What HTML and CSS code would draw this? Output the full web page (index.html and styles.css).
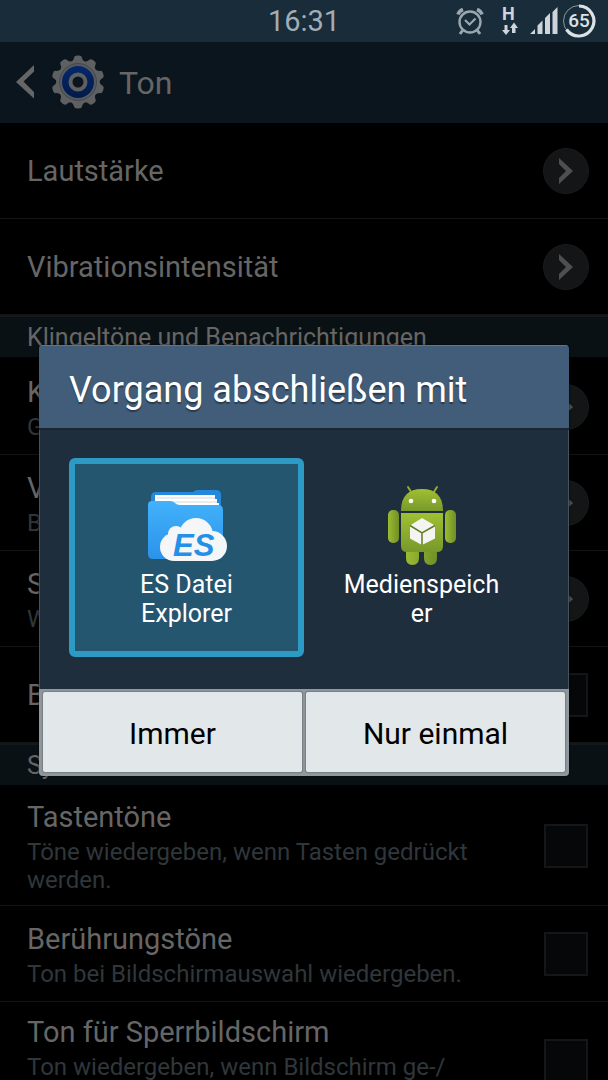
FILE: index.html
```html
<!DOCTYPE html>
<html lang="de">
<head>
    <meta charset="UTF-8">
    <meta name="viewport" content="width=device-width, initial-scale=1.0">
    <title>Ton</title>
    <link rel="stylesheet" href="styles.css">
</head>

<body>

    <div class="status-bar">
        <time class="clock">16:31</time>
        <div class="status-icons">
            <svg class="alarm" width="28" height="28" viewBox="0 0 28 28" fill="none" stroke="#9ba6ae">
                <circle cx="14" cy="15" r="10.5" stroke-width="2.4"/>
                <path d="M9 13l4.500 4.500 6-6" stroke-width="2.200"/>
                <path d="M2 7.500q1-3.500 5-5M26 7.500q-1-3.500-5-5" stroke-width="3.500"/>
                <path d="M6.500 23.500l-2.500 3.500M21.500 23.500l2.500 3.500" stroke-width="3"/>
            </svg>
            <svg class="net" width="16" height="30" viewBox="0 0 16 30" fill="#ced4d9">
                <text x="0" y="14" class="net-type">H</text>
                <path d="M2.500 19h3v5h2.500l-4 5-4-5h2.500zM10 27h3.500v-5h2.500l-4-5.500-4 5.500h2z"/>
            </svg>
            <svg width="28" height="28" viewBox="0 0 28 28" fill="#ced4d9">
                <path d="M0 27l5-5v5zM7.500 27v-8.500l5-5v13.500zM15 27v-16l5-5v21zM22.500 27v-22l5-5v27z"/>
            </svg>
            <svg width="34" height="34" viewBox="0 0 34 34">
                <circle cx="17" cy="17" r="15.500" fill="none" stroke="#8b959c" stroke-width="1"/>
                <path d="M17 2a15 15 0 1 1-12.500 23.500" fill="none" stroke="#dce1e6" stroke-width="3.200"/>
                <text x="17" y="23" text-anchor="middle" class="battery">65</text>
            </svg>
        </div>
    </div>

    <header class="title-bar">
        <a href="#" class="back" aria-label="Zurück">
            <svg width="18" height="34" viewBox="0 0 18 34"><path d="M18 0v6.500L7.500 16.500 18 27v6.500L0 17z" fill="#666"/></svg>
        </a>
        <svg class="gear" width="54" height="54" viewBox="-27 -27 54 54">
            <defs>
                <linearGradient id="ring" x1="0" y1="0" x2="0" y2="1">
                    <stop offset="0" stop-color="#04286c"/>
                    <stop offset="1" stop-color="#021a48"/>
                </linearGradient>
                <path id="tooth" d="M-7-20Q-4-22-3.500-25.500Q-3-26.500 0-26.500T3.500-25.500Q4-22 7-20z" fill="#5f6062"/>
            </defs>
            <use href="#tooth"/>
            <use href="#tooth" transform="rotate(36)"/>
            <use href="#tooth" transform="rotate(72)"/>
            <use href="#tooth" transform="rotate(108)"/>
            <use href="#tooth" transform="rotate(144)"/>
            <use href="#tooth" transform="rotate(180)"/>
            <use href="#tooth" transform="rotate(216)"/>
            <use href="#tooth" transform="rotate(252)"/>
            <use href="#tooth" transform="rotate(288)"/>
            <use href="#tooth" transform="rotate(324)"/>
            <circle r="21.500" fill="#5f6062"/>
            <circle r="18.500" fill="#565a5e" stroke="#45494d" stroke-width="1"/>
            <circle r="16" fill="url(#ring)"/>
            <circle r="7.500" fill="#0b151d" stroke="#5f6062" stroke-width="4"/>
        </svg>
        <h1>Ton</h1>
    </header>

    <main class="settings">
        <a href="#" class="row">
            <span class="text"><span class="name">Lautstärke</span></span>
            <span class="more"><svg width="14" height="26" viewBox="0 0 14 26"><path d="M0 0l14 13L0 26v-6l7-7-7-7z"/></svg></span>
        </a>
        <a href="#" class="row">
            <span class="text"><span class="name">Vibrationsintensität</span></span>
            <span class="more"><svg width="14" height="26" viewBox="0 0 14 26"><path d="M0 0l14 13L0 26v-6l7-7-7-7z"/></svg></span>
        </a>

        <h2>Klingeltöne und Benachrichtigungen</h2>
        <a href="#" class="row">
            <span class="text"><span class="name">Klingeltöne</span><span class="info">Galaxy</span></span>
            <span class="more"><svg width="14" height="26" viewBox="0 0 14 26"><path d="M0 0l14 13L0 26v-6l7-7-7-7z"/></svg></span>
        </a>
        <a href="#" class="row">
            <span class="text"><span class="name">Vibrationen</span><span class="info">Basic</span></span>
            <span class="more"><svg width="14" height="26" viewBox="0 0 14 26"><path d="M0 0l14 13L0 26v-6l7-7-7-7z"/></svg></span>
        </a>
        <a href="#" class="row">
            <span class="text"><span class="name">Standardton</span><span class="info">Whistle</span></span>
            <span class="more"><svg width="14" height="26" viewBox="0 0 14 26"><path d="M0 0l14 13L0 26v-6l7-7-7-7z"/></svg></span>
        </a>
        <label class="row">
            <span class="text"><span class="name">Beim Klingeln vibrieren</span></span>
            <input type="checkbox">
        </label>

        <h2>System</h2>
        <label class="row">
            <span class="text"><span class="name">Tastentöne</span><span class="info">Töne wiedergeben, wenn Tasten gedrückt werden.</span></span>
            <input type="checkbox">
        </label>
        <label class="row">
            <span class="text"><span class="name">Berührungstöne</span><span class="info">Ton bei Bildschirmauswahl wiedergeben.</span></span>
            <input type="checkbox">
        </label>
        <label class="row">
            <span class="text"><span class="name">Ton für Sperrbildschirm</span><span class="info">Ton wiedergeben, wenn Bildschirm ge-/<br>entsperrt wird.</span></span>
            <input type="checkbox">
        </label>
    </main>

    <div class="overlay">
        <section class="dialog" role="dialog" aria-labelledby="dialogTitle">
            <h2 id="dialogTitle" class="dialog-title">Vorgang abschließen mit</h2>
            <div class="apps">
                <button class="app selected">
                    <svg width="80" height="80" viewBox="0 0 80 80">
                        <defs>
                            <linearGradient id="folder" x1="0" y1="0" x2="0" y2="1">
                                <stop offset="0" stop-color="#43b1fb"/>
                                <stop offset="1" stop-color="#2a93ea"/>
                            </linearGradient>
                        </defs>
                        <path d="M4 12q0-5 5-5h37q2-2 5-2h18q5 0 5 5v30H4z" fill="#2489dc"/>
                        <path d="M8 10h60v4h2v4h2v6H8z" fill="#fff"/>
                        <path d="M10 13h58M10 17h60" stroke="#d0dae2" stroke-width="1"/>
                        <path d="M1 20q0-4 4-4h18q3 0 5 2t5 2h38q5 0 5 5v44q0 5-5 5H6q-5 0-5-5z" fill="url(#folder)"/>
                        <g fill="#f5f6f7">
                            <circle cx="27" cy="62" r="14"/>
                            <circle cx="29" cy="49" r="8"/>
                            <circle cx="49" cy="50" r="17"/>
                            <circle cx="65" cy="61" r="15"/>
                            <path d="M27 55h38v21H27z"/>
                        </g>
                        <text x="26" y="71" class="es">ES</text>
                    </svg>
                    <span class="app-name">ES Datei Explorer</span>
                </button>
                <button class="app">
                    <svg width="80" height="80" viewBox="0 0 80 80">
                        <defs>
                            <linearGradient id="droid" x1="0" y1="0" x2="0" y2="1">
                                <stop offset="0" stop-color="#a0c033"/>
                                <stop offset="1" stop-color="#78992a"/>
                            </linearGradient>
                            <linearGradient id="limb" x1="0" y1="0" x2="1" y2="0">
                                <stop offset="0" stop-color="#9bbb32"/>
                                <stop offset="1" stop-color="#708f27"/>
                            </linearGradient>
                        </defs>
                        <path d="M26 2l5 8M55 2l-5 8" stroke="#8dad2d" stroke-width="2" stroke-linecap="round"/>
                        <path d="M24 64h13v9q0 7-6.500 7t-6.500-7zM42 64h13v9q0 7-6.500 7t-6.500-7z" fill="url(#limb)"/>
                        <rect x="6" y="25" width="11" height="33" rx="5" fill="url(#limb)"/>
                        <rect x="63" y="25" width="11" height="33" rx="5" fill="url(#limb)"/>
                        <path d="M19 26Q19 4 40 4t21 22z" fill="url(#droid)"/>
                        <path d="M19 28h42v33q0 6-6 6H25q-6 0-6-6z" fill="url(#droid)"/>
                        <circle cx="29" cy="16" r="2.300" fill="#fff"/>
                        <circle cx="52" cy="16" r="2.300" fill="#fff"/>
                        <path d="M40 33l13 7.500v13L40 60l-12-6.500v-13z" fill="#f4f5f2"/>
                        <path d="M28 40.500l12 7.500 13-7.500M40 48v12" fill="none" stroke="#5f7b22" stroke-width="1.500"/>
                    </svg>
                    <span class="app-name">Medienspeicher</span>
                </button>
            </div>
            <div class="buttons">
                <button>Immer</button>
                <button>Nur einmal</button>
            </div>
        </section>
    </div>

</body>
</html>
```
FILE: styles.css
```css
* {
    box-sizing: border-box;
}

body {
    margin: 0;
    height: 100vh;
    overflow: hidden;
    background: #000;
    color: #666;
    font-family: Roboto, "Noto Sans", sans-serif;
}

h1, h2 {
    margin: 0;
    font-weight: 400;
}

a {
    color: inherit;
    text-decoration: none;
}

button {
    font-family: inherit;
    border: 0;
    padding: 0;
}

svg {
    display: block;
    flex-shrink: 0;
}

/* status bar */
.status-bar {
    display: grid;
    grid-template-columns: 1fr auto 1fr;
    align-items: center;
    height: 42px;
    padding: 0 12px;
    background: #182c3a;
}

.clock {
    grid-column: 2;
    font-size: 29px;
    color: #a3adb5;
}

.status-icons {
    display: flex;
    align-items: center;
    justify-content: flex-end;
    gap: 4px;
}

.alarm {
    margin-right: 14px;
}

.net {
    margin-right: 8px;
    overflow: visible;
}

.net-type {
    font-size: 18px;
    font-weight: 700;
}

.battery {
    font-size: 19px;
    font-weight: 500;
    fill: #dce1e6;
}

/* title bar */
.title-bar {
    display: flex;
    align-items: center;
    height: 81px;
    padding: 0 16px 2px;
    background: #0b151d;
}

.gear {
    margin: 0 14px 0 17px;
}

h1 {
    font-size: 32px;
    line-height: 36px;
    padding-top: 2px;
}

/* list */
.settings h2 {
    height: 42px;
    margin-bottom: 2px;
    padding: 0 27px;
    border-top: 2px solid #11191c;
    background: #0a1114;
    font-size: 25px;
    line-height: 42px;
}

.row {
    display: flex;
    align-items: center;
    gap: 20px;
    min-height: 96px;
    padding: 11px 19px 11px 27px;
    border-bottom: 1px solid #141414;
}

.text {
    flex: 1;
    display: flex;
    flex-direction: column;
    gap: 2px;
}

.name {
    font-size: 29px;
    line-height: 38px;
}

.info {
    font-size: 24px;
    line-height: 28px;
    color: #2f373b;
}

.more {
    display: flex;
    align-items: center;
    justify-content: center;
    width: 46px;
    height: 46px;
    border-radius: 50%;
    background: #141516;
    border: 1px solid #1a1b1c;
}

.more path {
    fill: #4e4f50;
}

input[type="checkbox"] {
    appearance: none;
    width: 44px;
    height: 44px;
    margin: 0 1px 0 0;
    border: 2px solid #151617;
    background: #060709;
}

/* dialog */
.overlay {
    position: absolute;
    inset: 42px 0 0;
    display: flex;
    align-items: center;
    justify-content: center;
    padding: 0 39px 1px;
}

.dialog {
    flex: 1;
    max-width: 640px;
    border-radius: 4px;
    overflow: hidden;
    background: #1e2e3c;
    box-shadow: 0 0 2px #000;
    color: #fff;
}

.dialog-title {
    height: 85px;
    padding: 0 30px;
    border-top: 1px solid #56789a;
    border-bottom: 2px solid #1a2732;
    background: #415d79;
    font-size: 36px;
    line-height: 88px;
    text-shadow: 0 2px 1px #2a3b4d;
}

.apps {
    display: flex;
    padding: 28px 29px 32px;
    border: solid #46525c;
    border-width: 0 1px;
}

.app {
    flex: 1;
    display: flex;
    flex-direction: column;
    align-items: center;
    gap: 5px;
    height: 199px;
    padding: 21px 30px 0;
    border: 6px solid transparent;
    border-radius: 6px;
    background: none;
    color: #fff;
}

.app.selected {
    border-color: #2d9ac6;
    background: #24566f;
}

.app-name {
    width: 100%;
    font-size: 25px;
    line-height: 29px;
    text-align: center;
    overflow-wrap: anywhere;
}

.es {
    font-family: "Liberation Sans", sans-serif;
    font-size: 31px;
    font-weight: 700;
    font-style: italic;
    fill: #2490e6;
}

.buttons {
    display: flex;
    gap: 4px;
    padding: 3px 4px 4px;
    background: #90989e;
}

.buttons button {
    flex: 1;
    height: 80px;
    padding-top: 2px;
    border-radius: 2px;
    background: #e2e7ea;
    box-shadow: 0 0 1px 1px #757e84;
    font-size: 30px;
    color: #000;
}
```
